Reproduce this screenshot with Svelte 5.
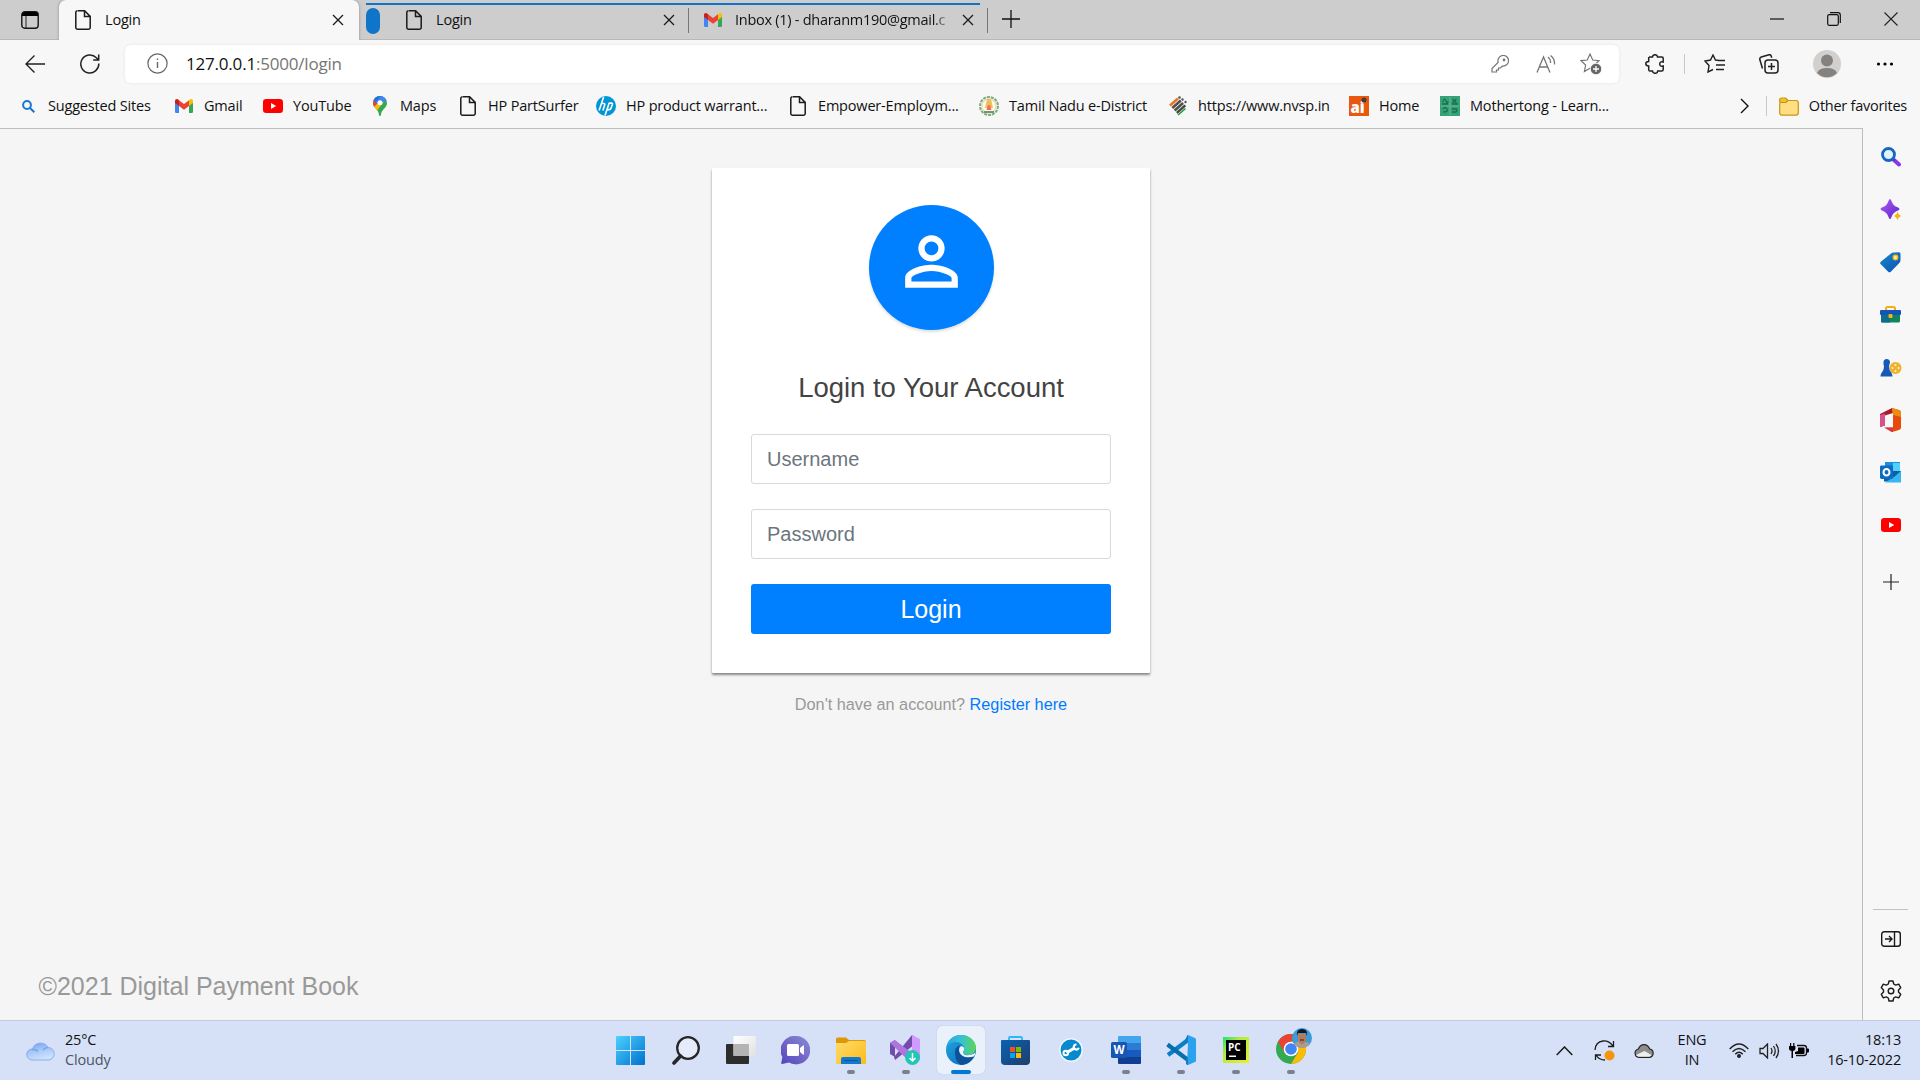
<script>
  const bookmarks = [
    { icon: 'find', label: 'Suggested Sites', width: 156 },
    { icon: 'gmail', label: 'Gmail', width: 89 },
    { icon: 'youtube', label: 'YouTube', width: 107 },
    { icon: 'maps', label: 'Maps', width: 88 },
    { icon: 'page', label: 'HP PartSurfer', width: 138 },
    { icon: 'hp', label: 'HP product warrant...', width: 192 },
    { icon: 'page', label: 'Empower-Employm...', width: 191 },
    { icon: 'emblem', label: 'Tamil Nadu e-District', width: 189 },
    { icon: 'nvsp', label: 'https://www.nvsp.in', width: 181 },
    { icon: 'ai', label: 'Home', width: 91 },
    { icon: 'tong', label: 'Mothertong - Learn...', width: 180 },
  ];
  const sidebar = ['search', 'discover', 'tag', 'tools', 'games', 'office', 'outlook', 'youtube'];
  const apps = [
    { icon: 'windows' },
    { icon: 'magnify' },
    { icon: 'taskview' },
    { icon: 'chat' },
    { icon: 'explorer', open: true },
    { icon: 'vs', open: true },
    { icon: 'edge', open: true, active: true },
    { icon: 'store' },
    { icon: 'wrench' },
    { icon: 'word', open: true },
    { icon: 'vscode', open: true },
    { icon: 'pycharm', open: true },
    { icon: 'chrome', open: true },
  ];
</script>

{#snippet glyph(name)}
  {#if name === 'page'}
    <svg width="16" height="20" viewBox="0 0 16 20" fill="none" stroke="#1b1b1b" stroke-width="1.5"><path d="M3 .8h6.6l5.6 5.6v11a1.8 1.8 0 0 1-1.8 1.8H2.6a1.8 1.8 0 0 1-1.8-1.8V2.6A1.8 1.8 0 0 1 2.6.8M9.500 1v5.500h5.600" /></svg>
  {:else if name === 'cross'}
    <svg width="12" height="12" viewBox="0 0 12 12" stroke="#1b1b1b" stroke-width="1.3"><path d="m1 1 10 10M11 1 1 11" /></svg>
  {:else if name === 'find'}
    <svg width="13" height="13" viewBox="0 0 13 13" fill="none" stroke="#1976d2" stroke-width="2"><circle cx="5" cy="5" r="3.9" /><path d="m8 8 4.3 4.3" /></svg>
  {:else if name === 'gmail'}
    <svg width="18" height="14" viewBox="0 0 18 14"><path fill="#4285f4" d="M0 3v9.8Q0 14 1.2 14H4V5z" /><path fill="#34a853" d="M14 5v9h2.8q1.2 0 1.2-1.2V3z" /><path fill="#fbbc04" d="M14 1.2V7l4-3V1.9C18 .2 16 -.6 14.7.6z" /><path fill="#c5221f" d="M0 1.9V4l4 3V1.2L3.3.6C2-.6 0 .2 0 1.9" /><path fill="#ea4335" d="M4 7V1.2L9 5l5-3.800V7l-5 3.800z" /></svg>
  {:else if name === 'youtube'}
    <svg width="20" height="14" viewBox="0 0 20 14"><rect width="20" height="14" rx="3.2" fill="#f00" /><path fill="#fff" d="m8 4 5.2 3L8 10z" /></svg>
  {:else if name === 'maps'}
    <svg width="14" height="20" viewBox="0 0 14 20"><clipPath id="pin"><path d="M7 0a7 7 0 0 0-7 7c0 5 5.700 6 6 12 .1 1.300 1.900 1.300 2 0 .3-6 6-7 6-12a7 7 0 0 0-7-7" /></clipPath><g clip-path="url(#pin)"><path fill="#34a853" d="M0 0h14v20H0z" /><path fill="#fbbc04" d="M-2 12 12 0v4L3 16z" /><path fill="#ea4335" d="M0 0h4l2 6-5 5-2-1z" /><path fill="#1a73e8" d="M2 0h8L3 7 0 3z" /><path fill="#4285f4" d="M5-2h10v6L5 8 2.500 6.500 8 0z" /></g><circle cx="7" cy="6.800" r="2.500" fill="#fff" /></svg>
  {:else if name === 'hp'}
    <svg width="20" height="20" viewBox="0 0 20 20"><circle cx="10" cy="10" r="10" fill="#0096d6" /><path fill="none" stroke="#fff" stroke-width="1.600" d="M7.600 1 3.100 14.500M5.400 7.500h2.300q1.500 0 1 1.600l-1.800 5.400M13.400 7.100h2q1.400 0 .9 1.600L15 12.300q-.4 1.300-1.800 1.300h-1.600M13.300 6.700 9 19.500" /></svg>
  {:else if name === 'emblem'}
    <svg width="20" height="20" viewBox="0 0 20 20"><circle cx="10" cy="10" r="9" fill="#f2efdc" stroke="#81aa83" stroke-width="2" stroke-dasharray="3 1" /><circle cx="10" cy="10" r="7" fill="#fff9e6" stroke="#cfdcc4" /><path fill="#eebf5e" d="M8 3h4l2 9H6z" /><path fill="#f36d61" d="M9 9h2l1.500 5h-5z" /><path fill="#6d9a6f" d="M5 15h10v2H5z" /></svg>
  {:else if name === 'nvsp'}
    <svg width="20" height="20" viewBox="0 0 20 20" fill="none"><path stroke="#e77726" stroke-width="2.600" d="m2 9.500 8-7" /><path stroke="#51504c" stroke-width="2.600" d="m4.300 12 8.500-7.500M6.600 14.500l8.500-7.500" /><path stroke="#3f4a40" stroke-width="2.400" d="m8.800 16.800 8.500-7.500" /><path stroke="#239642" stroke-width="1.600" d="m10 19 7.500-6.500" /><circle cx="11.500" cy="1.500" r="1.300" fill="#555" /><circle cx="14.500" cy="3.500" r="1.200" fill="#555" /><circle cx="17.500" cy="6" r="1.200" fill="#555" /></svg>
  {:else if name === 'ai'}
    <svg width="20" height="20" viewBox="0 0 20 20"><path fill="#e8590f" d="M0 0h20v20H0z" /><text x="1.500" y="17" font-family="Open Sans, sans-serif" font-weight="800" font-size="15" letter-spacing="0" fill="#fff">ai</text><circle cx="15" cy="4" r="2.600" fill="#4b3a35" /></svg>
  {:else if name === 'tong'}
    <svg width="20" height="20" viewBox="0 0 20 20"><path fill="#37a276" d="M0 0h20v20H0z" /><path stroke="#1b6e50" fill="none" stroke-width="1.300" d="M2.500 6q2-5 3.500-1t2 0M12.500 3l4 4m0-4-4 4M3 13q2-3 4 0t-4 3M12 13h5m-5 3h4q2-2 0-3M2 8h6m4 0h6" /><path stroke="#6cc09d" stroke-width=".8" d="M10 1v18M1 10h18" /></svg>
  {:else if name === 'search'}
    <svg width="20" height="20" viewBox="0 0 20 20" fill="none"><path d="m13 13 5 4.500" stroke="#8838e8" stroke-width="4" stroke-linecap="round" /><path d="m11.500 11.500 2 2" stroke="#3c3f72" stroke-width="2" /><circle cx="7.500" cy="7.500" r="6" stroke="#1766c2" stroke-width="2.800" fill="#dff2ff" /></svg>
  {:else if name === 'discover'}
    <svg width="22" height="22" viewBox="0 0 22 22"><defs><linearGradient id="spark" x2="1" y2="1"><stop stop-color="#b45bf7" /><stop offset="1" stop-color="#5423c8" /></linearGradient></defs><path fill="url(#spark)" d="M10 0q1 0 1.700 2.500 1.300 4 5.300 5.600 2.500.9 2.500 1.900t-2.500 1.900Q13 13.500 11.700 17.500 11 20 10 20t-1.700-2.500Q7 13.500 3 11.900.5 11 .5 10T3 8.100q4-1.600 5.300-5.600Q9 0 10 0" /><path fill="#f5b414" stroke="#f7f7f7" d="M17.500 12q1 3.800 4.500 5-3.500 1.200-4.500 5-1-3.800-4.500-5 3.500-1.200 4.500-5" /></svg>
  {:else if name === 'tag'}
    <svg width="21" height="21" viewBox="0 0 21 21"><defs><linearGradient id="tagfill" y2="1"><stop stop-color="#1689c9" /><stop offset="1" stop-color="#0c51b5" /></linearGradient></defs><path fill="url(#tagfill)" d="M11 1.500Q12 .5 14 .4l5-.2q1.500 0 1.500 1.500v6q0 2-1 3l-8.700 9q-1.300 1.300-2.600 0L.8 12.300q-1.300-1.300 0-2.600z" /><circle cx="15.500" cy="5.500" r="2.200" fill="#fff4c2" stroke="#f6b916" stroke-width="1.500" /></svg>
  {:else if name === 'tools'}
    <svg width="21" height="17" viewBox="0 0 21 17"><path fill="none" stroke="#f2ae18" stroke-width="2" d="M6 5V2.500Q6 1 7.500 1h6Q15 1 15 2.500V5" /><path fill="#10845a" d="M1 8h19v7q0 1.500-1.500 1.500h-16Q1 16.500 1 15z" /><path fill="#0d6d8c" d="M1 8h9v8.500H2.500Q1 16.500 1 15z" /><rect y="4" width="21" height="5" rx="1" fill="#1254b7" /><rect x="8.500" y="8" width="4" height="4" rx="1" fill="#f4b41a" /></svg>
  {:else if name === 'games'}
    <svg width="22" height="19" viewBox="0 0 22 19"><circle cx="15.500" cy="10" r="6" fill="#f2b128" /><g fill="#fff8e0"><circle cx="15.500" cy="7" r="1" /><circle cx="15.500" cy="13" r="1" /><circle cx="12.500" cy="10" r="1" /><circle cx="18.500" cy="10" r="1" /></g><path fill="#1659b6" d="M3.500 3.500a3.300 3.300 0 1 1 6 2.500L9 8.500q0 4 2.500 6.500 1 1 1 3.500H.5Q.5 16 1.500 15 4 12.500 4 8.500L3.500 6z" /></svg>
  {:else if name === 'office'}
    <svg width="21" height="24" viewBox="0 0 21 24"><path fill="#a91b28" d="M0 6 12 0l1 5-8 2.500v10l-5 1.500z" /><path fill="#d8518b" d="M0 7 5 5.500v12L0 19z" /><path fill="#e8490c" d="m12 0 7 2q2 .6 2 2.500v15q0 1.900-2 2.500L12 24l1-4V4.500z" /><path fill="#ee8b12" d="m12 0 7 2q2 .6 2 2.500V9l-8-2z" /><path fill="#d83643" d="m4 19.500 9-.2V24h-1.500z" /></svg>
  {:else if name === 'outlook'}
    <svg width="21" height="21" viewBox="0 0 21 21"><path fill="#1b90df" d="M5 0h15v12H5z" /><path fill="#50d0fb" d="M13 1h7v8h-7z" /><path fill="#0f5fa8" d="M4 9h17v10.500H4z" /><path fill="#35b8f1" d="M21 9v11.500H5L14 15z" /><rect y="3.500" width="13" height="13.500" rx="1.400" fill="#0d6bc0" /><ellipse cx="6.500" cy="10.200" rx="3" ry="3.300" fill="none" stroke="#fff" stroke-width="2" /></svg>
  {:else if name === 'windows'}
    <svg width="29" height="29" viewBox="0 0 29 29"><defs><linearGradient id="win" x2="1" y2="1"><stop stop-color="#4cd2ff" /><stop offset="1" stop-color="#0070cf" /></linearGradient></defs><path fill="url(#win)" d="M1 0h13v14H0V1q0-1 1-1m14 0h13q1 0 1 1v13H15zM0 15h14v14H1q-1 0-1-1zm15 0h14v13q0 1-1 1H15z" /></svg>
  {:else if name === 'magnify'}
    <svg width="28" height="29" viewBox="0 0 28 29" fill="none" stroke="#252729"><circle cx="16" cy="12" r="10.800" fill="#e5ebf8" stroke-width="2.300" /><path d="m8.500 20-6.500 7" stroke-width="3.600" stroke-linecap="round" /></svg>
  {:else if name === 'taskview'}
    <svg width="30" height="28" viewBox="0 0 30 28"><defs><linearGradient id="tv" x2="1" y2="1"><stop stop-color="#fff" /><stop offset="1" stop-color="#dfe0e2" /></linearGradient></defs><rect y="8" width="23" height="20" rx="1" fill="#2d2d2c" /><rect x="7.500" width="22.500" height="20" rx="1" fill="url(#tv)" /><path fill="#b3b3b3" d="M7.500 8H22q1 0 1 1v11H7.500z" /></svg>
  {:else if name === 'chat'}
    <svg width="29" height="29" viewBox="0 0 29 29"><defs><linearGradient id="ct" x1="1" x2="0" y2="1"><stop stop-color="#8690d5" /><stop offset=".5" stop-color="#7467c8" /><stop offset="1" stop-color="#5045bd" /></linearGradient></defs><path fill="url(#ct)" d="M15 0a14.200 14.200 0 1 1-7 26.500L1 28q-1 0-.8-1l1.200-6A14.200 14.200 0 0 1 15 0" /><rect x="6" y="8" width="12" height="12" rx="1.500" fill="#fff" /><path fill="#fff" d="m19 12 3-2.500q1-.5 1 .5v8q0 1-1 .5L19 16z" /></svg>
  {:else if name === 'explorer'}
    <svg width="30" height="27" viewBox="0 0 30 27"><defs><linearGradient id="fold" x2="1" y2="1"><stop stop-color="#ffdc6b" /><stop offset="1" stop-color="#fbbb18" /></linearGradient></defs><path fill="#dd9808" d="M0 2q0-1.500 1.500-1.500H10L13 3h15q2 0 2 2v6H0z" /><path fill="url(#fold)" d="M0 6h10l3-2h15q2 0 2 2v20q0 1-1 1H1q-1 0-1-1z" /><path fill="#1479cc" d="M5 27v-5q0-2 2-2h16q2 0 2 2v5z" /><path stroke="#08569e" d="M8 23.500h14" /></svg>
  {:else if name === 'vs'}
    <svg width="31" height="31" viewBox="0 0 31 31"><path fill="#704da8" d="M0 8 5 5v17l-5-3z" /><path fill="#7549ad" d="M4 22 22 0l3 2v7L5 25z" /><path fill="#ad75de" d="m5 5 18 14-5 6L0 8z" /><path fill="#d19aff" d="m22 0 8 4v21l-8 4z" /><circle cx="22.500" cy="22.500" r="7.500" fill="#22c6b6" /><path d="M22.500 18v8m-3-3 3 3 3-3" fill="none" stroke="#fff" stroke-width="1.500" /></svg>
  {:else if name === 'edge'}
    <svg width="30" height="30" viewBox="0 0 30 30"><defs><linearGradient id="wave"><stop stop-color="#27a7e6" /><stop offset=".5" stop-color="#35c1d5" /><stop offset="1" stop-color="#60d653" /></linearGradient><linearGradient id="deep" y2="1"><stop stop-color="#22a7df" /><stop offset="1" stop-color="#0867b8" /></linearGradient></defs><circle cx="15" cy="15" r="15" fill="url(#deep)" /><path fill="url(#wave)" d="M.2 13C1.500 5 7 0 15 0c8.500 0 15 6 15 12.500 0 5-4 7.500-8 7.500-3.500 0-5-1.400-5-2.500 0-.8 1.300-1.500 1.300-4C18.300 10.500 14.500 7 10 7 5 7 1.500 9.500.2 13" /><path fill="#0d519b" d="M9 17c0-3.500 2-6 5.500-7-2.500 2-2.700 11 7 11.700 3.500.2 6-1.200 7-1.700-2 5-7 10-13.500 10C11 28.500 9 22.500 9 17" /><path fill="#eef4fc" d="M14.500 11.500c2.200-.7 4 1 3.700 2.700-.2 1.600-1.200 2.300-1.200 3.300 0 2 3 3.500 8 2.200 2-.4 3.500-1.500 4.400-2.500q-.3 2-1.100 4-3.500 1.500-7.300 1C13 21.500 11.500 14 14.500 11.500" /></svg>
  {:else if name === 'store'}
    <svg width="29" height="29" viewBox="0 0 29 29"><defs><linearGradient id="bag" x2="1" y2="1"><stop stop-color="#0863b3" /><stop offset="1" stop-color="#203d6c" /></linearGradient></defs><path fill="none" stroke="#2db9f3" stroke-width="1.800" d="M8 6V2Q8 1 9 1h11q1 0 1 1v4" /><path fill="url(#bag)" d="M0 5q0-1 1-1h27q1 0 1 1v20q0 4-4 4H4q-4 0-4-4z" /><path fill="#f25022" d="M9 11h5v5H9z" /><path fill="#7fba00" d="M15 11h5v5h-5z" /><path fill="#00a4ef" d="M9 17h5v5H9z" /><path fill="#ffb900" d="M15 17h5v5h-5z" /></svg>
  {:else if name === 'wrench'}
    <svg width="24" height="24" viewBox="0 0 24 24"><circle cx="12" cy="12" r="11.200" fill="#068acd" stroke="#f1f6fb" stroke-width="1.500" /><path d="M7.500 14.700 15.500 10" stroke="#fff" stroke-width="3" /><circle cx="6.800" cy="15" r="2.300" fill="none" stroke="#fff" stroke-width="2" /><path fill="none" stroke="#fff" stroke-width="2.200" d="M17.500 6.500a2.500 2.500 0 1 0 2.200 3.200" /></svg>
  {:else if name === 'word'}
    <svg width="30" height="28" viewBox="0 0 30 28"><path fill="#43a5ee" d="M7 1q0-1 1-1h21q1 0 1 1v6H7z" /><path fill="#2b7cd3" d="M7 7h23v7H7z" /><path fill="#185abd" d="M7 14h23v7H7z" /><path fill="#103f91" d="M7 21h23v6q0 1-1 1H8q-1 0-1-1z" /><rect y="6" width="16" height="16" rx="1.500" fill="#1856b4" /><text x="8" y="18" text-anchor="middle" font-family="Open Sans, sans-serif" font-weight="700" font-size="11.500" fill="#fff">W</text></svg>
  {:else if name === 'vscode'}
    <svg width="30" height="30" viewBox="0 0 30 30"><path fill="none" stroke="#087fc7" stroke-width="4.200" stroke-linejoin="round" d="M22 5 2 20" /><path fill="none" stroke="#086ead" stroke-width="4.200" d="M1.500 9.500 22 25" /><path fill="#2ba2ee" d="m22 0 7 3q1 .5 1 1.500v21q0 1-1 1.500l-7 3q-1 0-1-1L22 8z" /><path fill="#137dc6" d="M21 1q0-1 1-1v30q-1 0-2-1v-6l2-1V8l-3-3z" /></svg>
  {:else if name === 'pycharm'}
    <svg width="26" height="26" viewBox="0 0 26 26"><defs><linearGradient id="pc" x2="1" y2="1"><stop stop-color="#20de7c" /><stop offset=".35" stop-color="#b4eb3c" /><stop offset="1" stop-color="#eaee28" /></linearGradient></defs><path fill="url(#pc)" d="M0 0h26v26H0z" /><path d="M3 3h20v20H3z" /><text x="5" y="13.500" font-family="Open Sans, sans-serif" font-weight="700" font-size="10" letter-spacing="0" fill="#fff">PC</text><path fill="#fff" d="M6 18.500h7V20H6z" /></svg>
  {:else if name === 'chrome'}
    <svg width="38" height="38" viewBox="0 0 38 38"><circle cx="16" cy="22" r="15" fill="#34a853" /><path fill="#ea4335" d="M3 14.500A15 15 0 0 1 29 14.500H16l-6.500 11z" /><path fill="#fbbc04" d="M29 14.500A15 15 0 0 1 16 37l7-11.500-1-7-6-4z" /><circle cx="16" cy="22" r="7.300" fill="#fff" /><circle cx="16" cy="22" r="5.800" fill="#4285f4" /><circle cx="27" cy="11" r="10" fill="#3f9ad8" /><path fill="#a99c91" d="M19 17q3-3 5-2.500h6q3 .5 5 2.500-3 4-8 4t-8-4" /><path fill="#b77a5b" d="M23 7h8v5q-1 5-4 5t-4-5z" /><path fill="#181719" d="M22 9q-1-7 5-7t5 7l-1-3h-8z" /><path stroke="#342521" d="M25 13h4" /></svg>
  {/if}
{/snippet}

<div class="desktop">
  <header class="tabs">
    <div class="workspace">
      <svg width="18" height="18" viewBox="0 0 18 18"><rect x=".8" y=".8" width="16.400" height="16.400" rx="3" fill="none" stroke="#161616" stroke-width="1.400" /><path d="M1 5V4q0-3 3-3h10q3 0 3 3v1z" /><path d="M5 5v12" stroke="#222" /></svg>
    </div>
    <div class="tab active">
      {@render glyph('page')}<span class="caption">Login</span>{@render glyph('cross')}
    </div>
    <div class="group">
      <i class="pill"></i>
      <div class="tab second">
        {@render glyph('page')}<span class="caption">Login</span>{@render glyph('cross')}
      </div>
      <div class="tab third">
        {@render glyph('gmail')}<span class="caption faded">Inbox (1) - dharanm190@gmail.c</span>{@render glyph('cross')}
      </div>
    </div>
    <div class="newtab">
      <svg width="18" height="18" viewBox="0 0 18 18" stroke="#111" stroke-width="1.300"><path d="M9 0v18M0 9h18" /></svg>
    </div>
    <div class="controls">
      <svg width="14" height="14" viewBox="0 0 14 14" stroke="#111" stroke-width="1.200"><path d="M0 7h14" /></svg>
      <svg width="14" height="14" viewBox="0 0 14 14" stroke="#111" stroke-width="1.200" fill="none"><rect x=".7" y="2.700" width="10.600" height="10.600" rx="1.500" /><path d="M3 .7h8q2.300 0 2.300 2.300v8" /></svg>
      <svg width="14" height="14" viewBox="0 0 14 14" stroke="#222" stroke-width="1.100"><path d="m.5.5 13 13m0-13-13 13" /></svg>
    </div>
  </header>

  <div class="toolbar">
    <svg width="20" height="18" viewBox="0 0 20 18" fill="none" stroke="#222" stroke-width="1.400"><path d="M20 9H1M9.500.5 1 9l8.500 8.500" /></svg>
    <svg class="reload" width="20" height="20" viewBox="0 0 20 20" fill="none" stroke="#222" stroke-width="1.500"><path d="M18.800 9.500a9 9 0 1 1-2.400-5.700l2 2M18.700.5v5.600h-5.500" /></svg>
    <div class="address">
      <svg width="21" height="21" viewBox="0 0 21 21" fill="none" stroke="#666" stroke-width="1.200"><circle cx="10.500" cy="10.500" r="9.600" /><path d="M10.500 9v6M10.500 5.500v1.600" stroke-width="1.400" /></svg>
      <span class="url"><b>127.0.0.1</b>:5000/login</span>
      <svg class="key" width="18" height="18" viewBox="0 0 18 18" fill="none" stroke="#767676" stroke-width="1.200"><path d="M7 6.500A5.300 5.300 0 1 1 11.500 11L9.500 13H7.500v2H5.500v2H1v-3.500l6-6z" /><circle cx="13" cy="5" r=".8" /></svg>
      <svg class="aloud" width="20" height="18" viewBox="0 0 20 18" fill="none" stroke="#767676" stroke-width="1.300"><path d="M1 17.500 7.500 2 14 17.500M3.500 12h8M12 2q3 2.500 2.500 6M14.500.5q4.500 3.500 4 9" /></svg>
      <svg width="22" height="22" viewBox="0 0 22 22"><path fill="none" stroke="#767676" stroke-width="1.200" d="m10 1 2.700 6 6.300.6-4.700 4.400 1.300 6.500L10 15.300 4.400 18.500l1.200-6.500L1 7.600 7.300 7z" /><circle cx="16" cy="16" r="5.700" fill="#666" stroke="#fff" stroke-width=".8" /><path stroke="#fff" stroke-width="1.300" d="M16 13v6m-3-3h6" /></svg>
    </div>
    <div class="actions">
      <svg width="20" height="20" viewBox="0 0 20 20" fill="none" stroke="#222" stroke-width="1.500"><path d="M4 3h3.500q0-2.300 2.500-2.300T12.500 3H17q1.200 0 1.200 1.200V8q-3.500-.7-3.500 2t3.500 2v3.500q0 1.500-1.500 1.500h-4q0 2.300-2.500 2.300T7.500 17H5q-1.300 0-1.300-1.300V12Q.8 12 .8 9.800T3.700 7.500V3" /></svg>
      <i class="rule"></i>
      <svg width="21" height="20" viewBox="0 0 21 20" fill="none" stroke="#222" stroke-width="1.400"><path d="M15 6.500 11.500 6 9 1 6.500 6 1 7l4 4.500L4 18l5-2.500M12 11h9M13 6.500h8M12 15.500h8" /></svg>
      <svg class="collections" width="20" height="20" viewBox="0 0 20 20" fill="none" stroke="#222" stroke-width="1.500"><path d="m3.500 14.500-2.700-9Q.5 3.600 2.300 3L10 .8q1.700-.4 2.200 1.200l.5 1.800" /><rect x="6" y="6" width="13" height="13" rx="3" /><path d="M12.500 9v7M9 12.500h7" /></svg>
      <svg width="28" height="28" viewBox="0 0 28 28"><circle cx="14" cy="14" r="14" fill="#d2d0ce" /><circle cx="14" cy="10.500" r="6" fill="#84817e" /><path fill="#84817e" d="M4 23q2-5 10-5t10 5a14 14 0 0 1-20 0" /></svg>
      <svg class="dots" width="18" height="4" viewBox="0 0 18 4"><circle cx="2.500" cy="2" r="1.600" /><circle cx="9" cy="2" r="1.600" /><circle cx="15.500" cy="2" r="1.600" /></svg>
    </div>
  </div>

  <nav class="bookmarks">
    {#each bookmarks as item}
      <div class="bookmark" style:width="{item.width}px">
        <span class="favicon">{@render glyph(item.icon)}</span>
        <span>{item.label}</span>
      </div>
    {/each}
    <div class="overflow">
      <svg width="9" height="16" viewBox="0 0 9 16" fill="none" stroke="#111" stroke-width="1.400"><path d="m1 1 7 7-7 7" /></svg>
      <i></i>
      <svg width="20" height="19" viewBox="0 0 20 19" stroke="#c79515" stroke-width="1.200"><path fill="#f4c430" d="M.7 5V3Q.7 1 2.700 1h4L9.500 4v2z" /><path fill="#ffdf82" d="M.7 7q0-1.500 1.500-1.500H7L9 3.500h8q2.300 0 2.300 2.300v10q0 2.300-2.300 2.300H3Q.7 18.100.7 15.800z" /></svg>
      <span>Other favorites</span>
    </div>
  </nav>

  <div class="body">
    <main>
      <form class="card">
        <div class="avatar">
          <svg width="79" height="79" viewBox="0 0 24 24" fill="#fff"><path d="M12 5.900a2.100 2.100 0 1 1 0 4.200 2.100 2.100 0 0 1 0-4.200m0 9c2.970 0 6.100 1.460 6.100 2.100v1.100H5.900V17c0-.64 3.130-2.100 6.100-2.100M12 4C9.790 4 8 5.790 8 8s1.790 4 4 4 4-1.790 4-4-1.790-4-4-4m0 9c-2.670 0-8 1.340-8 4v3h16v-3c0-2.660-5.330-4-8-4" /></svg>
        </div>
        <h1>Login to Your Account</h1>
        <input type="text" placeholder="Username" />
        <input type="password" placeholder="Password" />
        <button type="button">Login</button>
      </form>
      <p class="register">Don't have an account? <a href="#register">Register here</a></p>
      <footer>©2021 Digital Payment Book</footer>
    </main>
    <aside>
      {#each sidebar as name}
        <div class="tool">{@render glyph(name)}</div>
      {/each}
      <div class="tool add"><svg width="16" height="16" viewBox="0 0 16 16" stroke="#222" stroke-width="1.200"><path d="M8 0v16M0 8h16" /></svg></div>
      <div class="bottom">
        <svg width="20" height="16" viewBox="0 0 20 16" fill="none" stroke="#1b1b1b" stroke-width="1.400"><rect x=".7" y=".7" width="18.600" height="14.600" rx="2.500" /><path d="M13.500 1v14M4 8h7M8 5l3 3-3 3" /></svg>
        <svg width="22" height="22" viewBox="0 0 22 22" fill="none" stroke="#1b1b1b" stroke-width="1.400" stroke-linejoin="round"><path d="M9 1h4l.7 3 2 1.100 3-.9 2 3.500-2.200 2.200v2.200l2.200 2.200-2 3.500-3-.9-2 1.100L13 21H9l-.7-3-2-1.100-3 .9-2-3.500 2.200-2.200V9.900L1.300 7.700l2-3.500 3 .9 2-1.100z" /><circle cx="11" cy="11" r="2.800" /></svg>
      </div>
    </aside>
  </div>

  <div class="taskbar">
    <div class="weather">
      <svg width="30" height="20" viewBox="0 0 30 20"><defs><linearGradient id="sky" x2=".4" y2="1"><stop stop-color="#6f9ff0" /><stop offset=".55" stop-color="#a9c9f7" /><stop offset="1" stop-color="#cce1fb" /></linearGradient></defs><path fill="url(#sky)" stroke="#76a2ee" stroke-width=".8" d="M6 19a5.500 5.500 0 0 1 .5-11A8.500 8.500 0 0 1 22 6.500 6.300 6.300 0 0 1 23 19z" /><path fill="none" stroke="#7ca4eb" stroke-width="1.500" d="M6 8.500q4-.5 6 2M17 9q2-2.500 5-2.500" /></svg>
      <div><span>25°C</span><span class="dim">Cloudy</span></div>
    </div>
    <div class="apps">
      {#each apps as app}
        <div class="app" class:active={app.active} class:open={app.open}>
          <div class="tile" class:high={app.icon === 'chrome'}>{@render glyph(app.icon)}</div>
        </div>
      {/each}
    </div>
    <div class="tray">
      <svg width="17" height="10" viewBox="0 0 17 10" fill="none" stroke="#1b1b1b" stroke-width="1.500"><path d="m.7 9 7.800-8 7.800 8" /></svg>
      <svg class="sync" width="21" height="21" viewBox="0 0 21 21" fill="none" stroke="#1b1b1b" stroke-width="1.300"><path d="M1 10Q1.500 2 9 1q6-.5 10 5M19.500 1v5.500h-5.500M1.500 20v-5H7M2 15q3 5 9 5" /><circle cx="15.500" cy="15.500" r="5" fill="#f7940d" stroke="none" /></svg>
      <svg width="20" height="14" viewBox="0 0 20 14"><path fill="#8d8d8d" stroke="#222" stroke-width="1.200" d="M5 13.300a4.200 4.200 0 0 1-.6-8.300Q6 .7 10 .7T15.700 5a4.200 4.200 0 0 1-.2 8.300z" /><path fill="#eee" d="M2 11 10.500 7l7 4q-1 1.700-2.500 1.700H5Q3 12.700 2 11" /></svg>
      <div class="lang"><span>ENG</span><span>IN</span></div>
      <svg width="20" height="15" viewBox="0 0 20 15" fill="none" stroke="#222" stroke-width="1.400"><path d="M.7 6q9.300-10 18.600 0M3.500 8.800q6.500-6.500 13 0M6.200 11.200q3.800-3.700 7.600 0" /><circle cx="10" cy="13" r="1.300" fill="#222" /></svg>
      <svg class="volume" width="21" height="16" viewBox="0 0 21 16" fill="none" stroke="#222" stroke-width="1.300"><path d="M1 5.500h3L8.500 1v14L4 10.500H1zM12 5q2 3 0 6M14.500 3q3.500 5 0 10M17 1q5 7 0 14" /></svg>
      <svg width="21" height="15" viewBox="0 0 21 15"><path fill="none" stroke="#111" stroke-width="1.300" d="M8 2.500h7q2.500 0 2.500 2.500v5q0 2.500-2.500 2.500H7" /><path d="M6 11V9l3-1V4.500h5.500q1 0 1 1V10q0 1-1 1zM18 5.500h1q1 0 1 1v2q0 1-1 1h-1zM0 3h1V0h1.200v3h2V0h1.200v3h1v3Q6.400 7.500 4 8v7H2.500V8Q0 7.500 0 6z" /></svg>
      <div class="clock"><span>18:13</span><span>16-10-2022</span></div>
    </div>
  </div>
</div>

<style>
  :global(body) { margin: 0; overflow: hidden; }
  svg { display: block; flex: none; }
  .desktop { width: 1920px; height: 1080px; display: flex; flex-direction: column; font: 14.5px/20px 'Open Sans', 'Noto Sans', sans-serif; letter-spacing: -.18px; color: #111; background: #f7f7f7; }

  .tabs { height: 40px; box-sizing: border-box; display: flex; background: #cdcdcd; box-shadow: inset 0 -1px #b9b9b9; flex: none; }
  .workspace { width: 59px; box-sizing: border-box; padding: 11px 0 0 21px; border-bottom-right-radius: 6px; }
  .tab { display: flex; align-items: center; box-sizing: border-box; height: 40px; flex: none; }
  .caption { flex: 1; white-space: nowrap; }
  .active.tab { width: 300px; padding: 0 15px 0 16px; border-radius: 7px 7px 0 0; background: #f7f7f7; box-shadow: 0 0 3px #888; clip-path: inset(0 -4px 0 -4px); }
  .active .caption, .second .caption { margin-left: 14px; }
  .group { width: 614px; margin-left: 7px; height: 40px; display: flex; background: linear-gradient(#0f75c8, #0f75c8) 0 3px / 100% 2px no-repeat; }
  .pill { width: 14px; height: 26px; margin-top: 8px; border-radius: 7px; background: #0f75c8; flex: none; }
  .second { width: 309px; padding: 0 14px 0 26px; background: linear-gradient(#777, #777) 100% 8px / 1px 25px no-repeat; }
  .third { width: 299px; padding: 0 14px 0 15px; background: linear-gradient(#777, #777) 100% 8px / 1px 25px no-repeat; }
  .third .caption { margin: 0 9px 0 13px; letter-spacing: -.27px; }
  .faded { mask-image: linear-gradient(90deg, #000 91%, #0003 98%); }
  .newtab { margin: 10px 0 0 22px; }
  .controls { margin: 12px 22px 0 auto; display: flex; gap: 43px; }

  .toolbar { height: 48px; box-sizing: border-box; padding: 0 26px 0 25px; display: flex; align-items: center; flex: none; }
  .reload { margin: 0 25px 0 35px; }
  .address { width: 1494px; height: 38px; margin-top: -1px; box-sizing: border-box; padding: 0 17px 0 22px; display: flex; align-items: center; background: #fff; border-radius: 6px; box-shadow: 0 0 3px #e3e3e3; }
  .url { flex: 1; margin-left: 18px; font-size: 17px; letter-spacing: -.2px; color: #757575; }
  .url b { font-weight: 400; color: #111; }
  .key { margin-right: 27px; }
  .aloud { margin-right: 24px; }
  .actions { flex: 1; margin-left: 26px; display: flex; align-items: center; }
  .rule { width: 1px; height: 20px; background: #c8c8c8; margin: 0 19px; }
  .collections { margin: 0 34px; }
  .dots { margin-left: auto; }

  .bookmarks { height: 40px; display: flex; align-items: center; padding: 0 13px 4px 18px; box-sizing: border-box; flex: none; }
  .bookmark { display: flex; align-items: center; gap: 10px; flex: none; white-space: nowrap; }
  .favicon { width: 20px; display: flex; justify-content: center; flex: none; }
  .overflow { margin-left: auto; display: flex; align-items: center; white-space: nowrap; }
  .overflow i { width: 1px; height: 20px; margin: 0 12px 0 17px; background: #c8c8c8; }
  .overflow span { margin-left: 10px; letter-spacing: -.25px; }

  .body { flex: 1; display: flex; min-height: 0; }
  main { width: 1863px; box-sizing: border-box; border: solid #bcbcbc; border-width: 1px 1px 0 0; background: #f5f5f5; display: flex; flex-direction: column; align-items: center; padding-top: 39px; font-family: 'Liberation Sans', Arial, sans-serif; letter-spacing: 0; }
  .card { width: 438px; height: 505px; box-sizing: border-box; padding: 37px 39px 0; display: flex; flex-direction: column; align-items: center; background: #fff; box-shadow: 0 2px 2.500px #858988; border-radius: 1px; }
  .avatar { width: 125px; height: 125px; border-radius: 50%; background: #007fff; display: flex; justify-content: center; padding: 17px 0 0 1px; box-sizing: border-box; box-shadow: 0 2px 3px #0002; }
  h1 { margin: 38px 0 27px; font-size: 27.5px; line-height: 39px; font-weight: 400; color: #434343; letter-spacing: -.02px; white-space: nowrap; }
  input, button { width: 360px; height: 50px; box-sizing: border-box; border-radius: 3px; font-family: inherit; flex: none; }
  input { margin: 0 0 25px; padding: 0 15px; border: 1px solid #d9d9d9; font-size: 20px; background: #fff; }
  input::placeholder { color: #6c757d; opacity: 1; }
  button { padding: 0; border: 0; background: #007fff; color: #fff; font-size: 25px; }
  .register { margin: 21px 0 0; font-size: 16.25px; line-height: 20px; color: #999; }
  .register a { color: #007bff; text-decoration: none; }
  footer { align-self: stretch; margin: auto 0 19px 38.5px; font-size: 25px; line-height: 30px; color: #999; }

  aside { width: 57px; box-sizing: border-box; display: flex; flex-direction: column; align-items: center; padding: 3px 2px 0 0; }
  .tool { height: 52.5px; display: flex; align-items: center; }
  .add { height: 61px; }
  .bottom { margin-top: auto; width: 35px; height: 111px; box-sizing: border-box; border-top: 1px solid #c3c3c3; padding-top: 21px; display: flex; flex-direction: column; align-items: center; gap: 33px; }

  .taskbar { height: 60px; box-sizing: border-box; border-top: 1px solid #bfcbe8; background: #d6e1f8; display: flex; justify-content: space-between; flex: none; }
  .weather { width: 603px; display: flex; align-items: center; gap: 9px; padding-left: 26px; box-sizing: border-box; }
  .weather div, .lang, .clock { display: flex; flex-direction: column; margin-top: -1px; }
  .dim { color: #4c5562; }
  .apps { display: flex; width: 715px; }
  .app { width: 55px; display: flex; justify-content: center; flex: none; padding-top: 5px; box-sizing: border-box; }
  .tile { position: relative; width: 48px; height: 48px; display: flex; justify-content: center; align-items: center; box-sizing: border-box; border-radius: 5px; }
  .tile.high { padding: 0 0 9px 6px; }
  .app.active .tile { background: #ebf1fb; box-shadow: 0 0 1px #9daac4; }
  .app.open .tile::after { content: ''; position: absolute; left: 20px; bottom: 0; width: 8px; height: 4px; border-radius: 2px; background: #7b8089; }
  .app.active .tile::after { left: 14px; width: 20px; background: #0078d4; }
  .tray { width: 602px; box-sizing: border-box; padding: 0 19px 0 238px; display: flex; align-items: center; }
  .sync { margin: 0 19px 0 21px; }
  .lang { width: 30px; margin-left: 23px; margin-right: 22px; text-align: center; }
  .volume { margin: 0 9px 0 10px; }
  .clock { margin-left: auto; text-align: right; }
</style>
